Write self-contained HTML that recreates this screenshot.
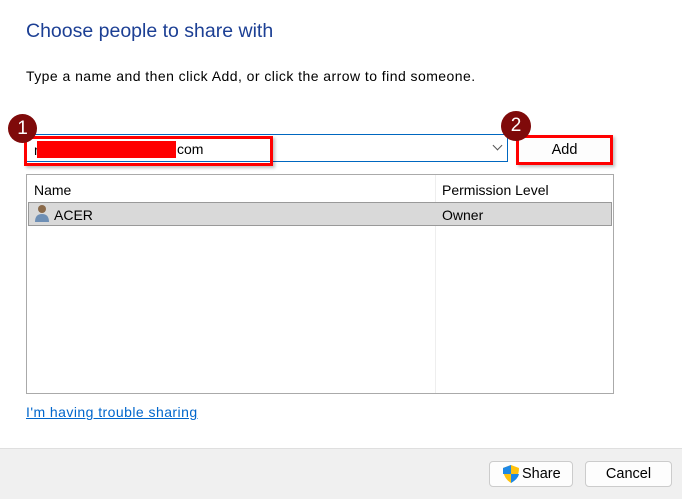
<!DOCTYPE html><html><head><style>
body{margin:0;width:682px;height:498px;background:#fff;font-family:"Liberation Sans",sans-serif;position:relative;overflow:hidden;color:#000}
.a{position:absolute}
</style></head><body>
<div class="a" style="left:26px;top:20px;font-size:19.5px;color:#1c3f94">Choose people to share with</div>
<div class="a" style="left:26px;top:68px;font-size:14px;letter-spacing:0.45px">Type a name and then click Add, or click the arrow to find someone.</div>
<div class="a" style="left:26px;top:134px;width:482px;height:28px;border:1px solid #0067c0;box-sizing:border-box"></div>
<div class="a" style="left:494px;top:142px;width:6px;height:6px;border-right:1px solid #555;border-bottom:1px solid #555;transform:rotate(45deg)"></div>
<div class="a" style="left:24px;top:136px;width:249px;height:30px;border:3px solid #f00;box-sizing:border-box;box-shadow:2px 2px 3px rgba(0,0,0,.25)"></div>
<div class="a" style="left:34px;top:142px;font-size:14px">m</div>
<div class="a" style="left:37px;top:141px;width:139px;height:17px;background:#f00"></div>
<div class="a" style="left:177px;top:141px;font-size:14px">com</div>
<div class="a" style="left:8px;top:114px;width:29px;height:29px;border-radius:50%;background:#7f0a0a;color:#fff;font-size:19px;text-align:center;line-height:29px">1</div>
<div class="a" style="left:516px;top:135px;width:97px;height:30px;border:3px solid #f00;box-sizing:border-box;background:#fdfdfd;text-align:center;line-height:24px;font-size:14.5px;box-shadow:2px 2px 3px rgba(0,0,0,.25)">Add</div>
<div class="a" style="left:501px;top:111px;width:30px;height:30px;border-radius:50%;background:#7f0a0a;color:#fff;font-size:19px;text-align:center;line-height:30px">2</div>
<div class="a" style="left:26px;top:174px;width:588px;height:220px;border:1px solid #aaa;box-sizing:border-box"></div>
<div class="a" style="left:435px;top:175px;width:1px;height:218px;background:#eee"></div>
<div class="a" style="left:34px;top:182px;font-size:14px">Name</div>
<div class="a" style="left:442px;top:182px;font-size:14px">Permission Level</div>
<div class="a" style="left:28px;top:202px;width:584px;height:24px;background:#d9d9d9;border:1px solid #999;box-sizing:border-box"></div>
<svg class="a" style="left:34px;top:204px" width="16" height="19"><circle cx="8" cy="5" r="4" fill="#8a6a4a"/><path d="M1 18 Q1 10 8 10 Q15 10 15 18Z" fill="#6e8fb5"/></svg>
<div class="a" style="left:54px;top:207px;font-size:14px">ACER</div>
<div class="a" style="left:442px;top:207px;font-size:14px">Owner</div>
<div class="a" style="left:26px;top:404px;font-size:14px;letter-spacing:0.45px;color:#0066cc;text-decoration:underline">I'm having trouble sharing</div>
<div class="a" style="left:0;top:448px;width:682px;height:50px;background:#f0f0f0;border-top:1px solid #dfdfdf"></div>
<div class="a" style="left:489px;top:461px;width:84px;height:26px;border:1px solid #ccc;border-radius:4px;background:#fdfdfd;box-sizing:border-box"></div>
<svg class="a" style="left:502px;top:464px" width="18" height="20"><path d="M9 1 L17 4 Q17 14 9 19 Q1 14 1 4Z" fill="#ffc20e"/><path d="M9 1 L9 10 L1 10 Q1 6 1 4Z" fill="#1e88e5"/><path d="M9 10 L17 10 Q16 15 9 19Z" fill="#1e88e5"/></svg>
<div class="a" style="left:522px;top:466px;font-size:14.5px">Share</div>
<div class="a" style="left:585px;top:461px;width:87px;height:26px;border:1px solid #ccc;border-radius:4px;background:#fdfdfd;box-sizing:border-box;text-align:center;line-height:24px;font-size:14.5px">Cancel</div>
</body></html>
